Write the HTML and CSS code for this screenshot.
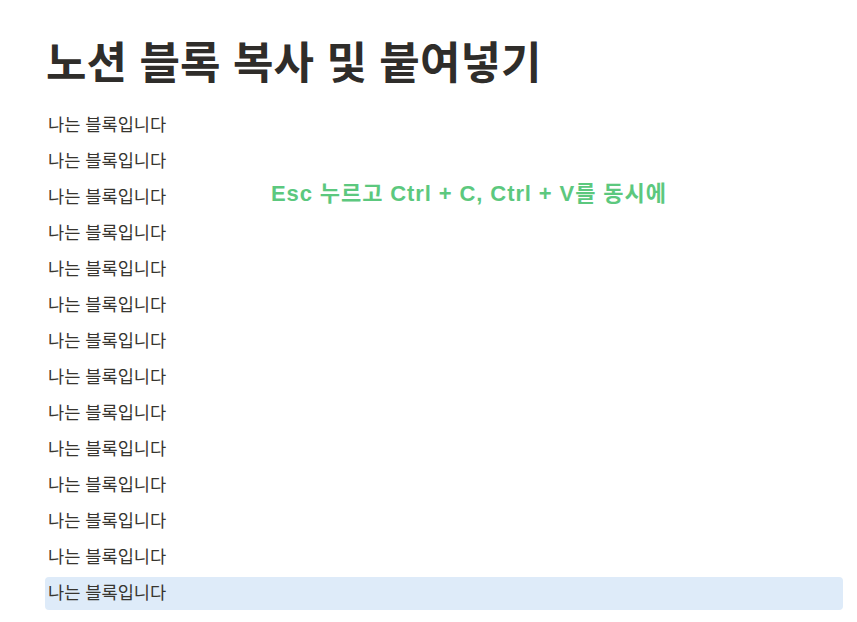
FILE: index.html
```html
<!DOCTYPE html>
<html lang="ko">
<head>
<meta charset="utf-8">
<link rel="stylesheet" href="styles.css">
</head>
<body>
<main class="page">
  <h1 class="title">노션 블록 복사 및 붙여넣기</h1>
  <div class="blocks">
    <div class="block">나는 블록입니다</div>
    <div class="block">나는 블록입니다</div>
    <div class="block">나는 블록입니다</div>
    <div class="block">나는 블록입니다</div>
    <div class="block">나는 블록입니다</div>
    <div class="block">나는 블록입니다</div>
    <div class="block">나는 블록입니다</div>
    <div class="block">나는 블록입니다</div>
    <div class="block">나는 블록입니다</div>
    <div class="block">나는 블록입니다</div>
    <div class="block">나는 블록입니다</div>
    <div class="block">나는 블록입니다</div>
    <div class="block">나는 블록입니다</div>
    <div class="block selected">나는 블록입니다</div>
  </div>
  <div class="hint">Esc 누르고 Ctrl + C, Ctrl + V를 동시에</div>
</main>
</body>
</html>
```
FILE: styles.css
```css
html, body {
  margin: 0;
  padding: 0;
  background: #ffffff;
}
body {
  font-family: "Liberation Sans", "Noto Sans CJK KR", sans-serif;
  color: #37352f;
}
.page {
  position: relative;
  padding: 28px 14px 0 45px;
}
.title {
  margin: 0 0 0 1px;
  font-size: 44px;
  font-weight: 700;
  line-height: 72px;
  letter-spacing: 0.1px;
  color: #2f2d2a;
}
.blocks {
  display: flex;
  flex-direction: column;
  gap: 3px;
  margin-top: 9px;
}
.block {
  height: 33px;
  line-height: 33px;
  padding-left: 3px;
  font-size: 17.6px;
  border-radius: 4px;
}
.selected {
  background: #deebf9;
}
.hint {
  position: absolute;
  left: 271px;
  top: 178px;
  font-size: 22px;
  font-weight: 700;
  letter-spacing: 0.9px;
  color: #5cc87e;
  line-height: 32px;
}
```
